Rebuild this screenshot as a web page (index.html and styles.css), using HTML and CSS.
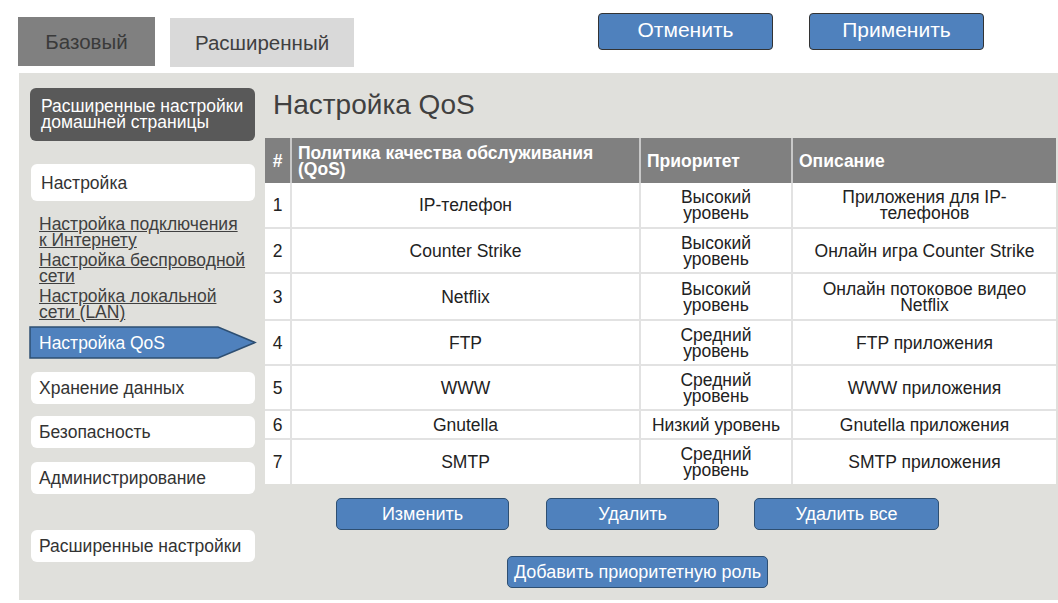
FILE: index.html
```html
<!DOCTYPE html>
<html lang="ru">
<head>
<meta charset="utf-8">
<title>Настройка QoS</title>
<link rel="stylesheet" href="styles.css">
</head>
<body>
<div class="topbar">
  <div class="tab tab-basic">Базовый</div>
  <div class="tab tab-adv">Расширенный</div>
  <div class="top-actions">
    <button class="btn-top">Отменить</button>
    <button class="btn-top">Применить</button>
  </div>
</div>
<div class="panel">
  <aside class="sidebar">
    <div class="side-head">Расширенные настройки домашней страницы</div>
    <div class="side-item side-setup">Настройка</div>
    <div class="links">
      <a class="side-link" href="#">Настройка подключения к Интернету</a>
      <a class="side-link" href="#">Настройка беспроводной сети</a>
      <a class="side-link" href="#">Настройка локальной сети (LAN)</a>
    </div>
    <div class="side-active">
      <svg class="arrow" width="228" height="33" viewBox="0 0 228 33"><polygon points="1,1 189,1 226,16.5 189,32 1,32" fill="#4f81bd" stroke="#2e4f72" stroke-width="1.5"/></svg>
      <span class="active-label">Настройка QoS</span>
    </div>
    <div class="side-item side-storage">Хранение данных</div>
    <div class="side-item side-sec">Безопасность</div>
    <div class="side-item side-admin">Администрирование</div>
    <div class="side-item side-extra">Расширенные настройки</div>
  </aside>
  <main class="content">
    <h1 class="title">Настройка QoS</h1>
    <table class="qos">
      <colgroup><col class="c1"><col class="c2"><col class="c3"><col class="c4"></colgroup>
      <thead>
        <tr><th class="num">#</th><th>Политика качества обслуживания (QoS)</th><th>Приоритет</th><th>Описание</th></tr>
      </thead>
      <tbody>
        <tr class="r2"><td class="num">1</td><td>IP-телефон</td><td>Высокий уровень</td><td>Приложения для IP-телефонов</td></tr>
        <tr class="r2"><td class="num">2</td><td>Counter Strike</td><td>Высокий уровень</td><td>Онлайн игра Counter Strike</td></tr>
        <tr class="r3"><td class="num">3</td><td>Netflix</td><td>Высокий уровень</td><td>Онлайн потоковое видео Netflix</td></tr>
        <tr class="r2"><td class="num">4</td><td>FTP</td><td>Средний уровень</td><td>FTP приложения</td></tr>
        <tr class="r2"><td class="num">5</td><td>WWW</td><td>Средний уровень</td><td>WWW приложения</td></tr>
        <tr class="r1"><td class="num">6</td><td>Gnutella</td><td>Низкий уровень</td><td>Gnutella приложения</td></tr>
        <tr class="r2"><td class="num">7</td><td>SMTP</td><td>Средний уровень</td><td>SMTP приложения</td></tr>
      </tbody>
    </table>
    <div class="actions">
      <button class="btn btn-edit">Изменить</button>
      <button class="btn btn-del">Удалить</button>
      <button class="btn btn-delall">Удалить все</button>
    </div>
    <div class="actions2">
      <button class="btn btn-add">Добавить приоритетную роль</button>
    </div>
  </main>
</div>
</body>
</html>
```
FILE: styles.css
```css
* { box-sizing: border-box; }
html, body { margin: 0; padding: 0; background: #fff; }
body {
  font-family: "Liberation Sans", Arial, sans-serif;
  color: #333;
  width: 1058px;
  height: 603px;
  overflow: hidden;
}
.topbar {
  display: flex;
  align-items: flex-start;
  height: 73px;
  padding-left: 18px;
}
.tab {
  font-size: 20.5px;
  color: #404040;
  display: flex;
  align-items: center;
  justify-content: center;
  height: 49px;
}
.tab-basic {
  margin-top: 17px;
  width: 137px;
  background: #808080;
  color: #3a3a3a;
}
.tab-adv {
  margin-top: 18px;
  margin-left: 15px;
  width: 184px;
  background: #d9d9d9;
}
.top-actions {
  display: flex;
  gap: 36px;
  margin-left: 244px;
  margin-top: 13px;
}
.btn-top {
  width: 175px;
  height: 37px;
  background: #4f81bd;
  border: 1px solid #333;
  border-radius: 4px;
  color: #fff;
  font-family: "Liberation Sans", Arial, sans-serif;
  font-size: 21px;
  padding: 0 0 3px;
}
.panel {
  margin-left: 19px;
  height: 527px;
  background: #e0e0dc;
  display: flex;
  align-items: flex-start;
  padding: 15px 2px 0 11px;
}
.sidebar {
  width: 226px;
  display: flex;
  flex-direction: column;
  font-size: 17.5px;
  line-height: 16px;
}
.side-head {
  height: 53px;
  background: #595959;
  border-radius: 6px;
  color: #fff;
  padding: 10px 6px 0 11px;
  width: 225px;
}
.side-item {
  background: #fff;
  border-radius: 6px;
  height: 32px;
  display: flex;
  align-items: center;
  padding-left: 8px;
  margin-left: 1px;
  width: 224px;
  color: #333;
}
.side-setup { margin-top: 23px; height: 37px; padding-left: 10px; }
.links {
  margin-top: 15px;
  display: flex;
  flex-direction: column;
  gap: 4px;
  padding-left: 9px;
}
.side-link {
  color: #404040;
  text-decoration: underline;
  display: block;
  width: 208px;
}
.side-active {
  position: relative;
  margin-top: 6px;
  height: 33px;
  display: flex;
  align-items: center;
}
.arrow { position: absolute; left: -1px; top: 0; }
.active-label {
  position: relative;
  color: #fff;
  padding-left: 9px;
}
.side-storage { margin-top: 13px; }
.side-sec { margin-top: 12px; }
.side-admin { margin-top: 14px; }
.side-extra { margin-top: 36px; }
.content {
  margin-left: 9px;
  width: 791px;
}
.title {
  margin: 2px 0 0 8px;
  font-size: 28px;
  font-weight: normal;
  color: #404040;
  line-height: 30px;
  height: 48px;
}
.qos {
  width: 791px;
  border-collapse: collapse;
  table-layout: fixed;
  font-size: 17.5px;
  line-height: 16px;
}
.c1 { width: 26px; }
.c2 { width: 349px; }
.c3 { width: 152px; }
.c4 { width: 264px; }
.qos th {
  background: #808080;
  color: #fff;
  font-weight: bold;
  text-align: left;
  height: 45px;
  padding: 0 6px;
  border-left: 2px solid #c8c8c8;
  vertical-align: middle;
}
.qos th:first-child { border-left: none; }
.qos th.num { text-align: center; padding: 0; }
.qos td {
  background: #fff;
  color: #222;
  text-align: center;
  vertical-align: middle;
  padding: 0 10px;
  border: 2px solid #e2e2e2;
  border-top: none;
}
.qos td:first-child { border-left: none; }
.qos td:last-child { border-right: none; }
.qos td.num { padding: 0; }
.qos tr:last-child td { border-bottom: none; }
.r2 td { height: 45px; }
.r3 td { height: 47px; }
.r1 td { height: 29px; }
.actions {
  display: flex;
  margin-top: 14px;
  padding-left: 71px;
  gap: 37px;
}
.btn {
  height: 32px;
  background: #4f81bd;
  border: 1px solid #2e4f72;
  border-radius: 5px;
  color: #fff;
  font-family: "Liberation Sans Narrow", "Liberation Sans", Arial, sans-serif;
  font-size: 18px;
  padding: 0;
}
.btn-edit { width: 173px; }
.btn-del { width: 173px; }
.btn-delall { width: 185px; margin-left: -2px; }
.actions2 {
  display: flex;
  margin-top: 26px;
  padding-left: 242px;
}
.btn-add { width: 261px; }
```
